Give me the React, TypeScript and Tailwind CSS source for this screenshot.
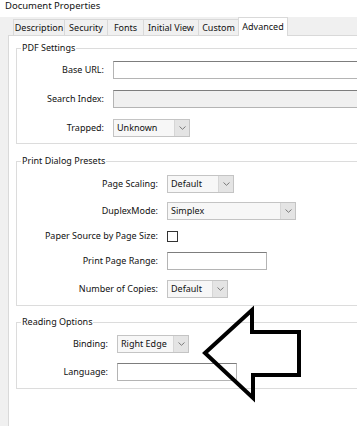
import React from 'react';

const tabs = [
  { name: 'Description', w: 'w-[51px]' },
  { name: 'Security', w: 'w-[43px]' },
  { name: 'Fonts', w: 'w-[36px]' },
  { name: 'Initial View', w: 'w-[55px]' },
  { name: 'Custom', w: 'w-[40px]' },
];

function Chevron() {
  return (
    <svg width="7" height="4" viewBox="0 0 7 4" fill="none">
      <path d="M0.5 0.5 L3.5 3.3 L6.5 0.5" stroke="#7a7a7a" strokeWidth="1" />
    </svg>
  );
}

function Select({ value, className }: { value: string; className: string }) {
  return (
    <div className={`flex h-[18px] border border-[#c4c4c4] ${className}`}>
      <div className="flex flex-1 items-center bg-[#f7f7f7] pl-[3px]">{value}</div>
      <div className="flex w-[15px] items-center justify-center border-l border-[#d6d6d6] bg-[#e4e4e4]">
        <Chevron />
      </div>
    </div>
  );
}

function TextBox({ className, disabled }: { className: string; disabled?: boolean }) {
  return (
    <div
      className={`h-[18px] border border-[#b4b4b4] border-t-[#7d7d7d] ${
        disabled ? 'bg-[#f0f0f0]' : 'bg-white'
      } ${className}`}
    />
  );
}

function Row({
  label,
  labelW,
  className,
  children,
}: {
  label: string;
  labelW: string;
  className?: string;
  children: React.ReactNode;
}) {
  return (
    <div className={`flex h-[18px] items-center ${className ?? ''}`}>
      <div className={`${labelW} shrink-0 text-right`}>{label}</div>
      <div className="ml-[9px]">{children}</div>
    </div>
  );
}

// group box: title sits on the top border line, box runs off the right edge
function Group({
  title,
  className,
  children,
}: {
  title: string;
  className?: string;
  children: React.ReactNode;
}) {
  return (
    <div className={`ml-[7px] border border-r-0 border-[#dcdcdc] ${className ?? ''}`}>
      <div className="-mt-[7px] ml-[4px] w-fit bg-white px-[1px] leading-[12px]">{title}</div>
      {children}
    </div>
  );
}

export default function App() {
  return (
    <div className="relative h-[426px] w-[357px] overflow-hidden bg-white font-['Noto_Sans',sans-serif] text-[9px] text-[#111]">
      <div className="h-[17px] pl-[5px] pt-[1px] text-[9.5px] leading-[10px]">Document Properties</div>

      <div className="flex h-[409px] flex-col bg-[#f0f0f0]">
        <div className="flex h-[18px] items-end pl-[13px]">
          {tabs.map((t) => (
            <div
              key={t.name}
              className={`${t.w} flex h-[16px] items-center justify-center border-l border-t border-[#d9d9d9] bg-[#f0f0f0]`}
            >
              {t.name}
            </div>
          ))}
          <div className="relative z-10 mb-[-1px] flex h-[19px] w-[50px] items-start justify-center border border-b-0 border-[#d9d9d9] bg-white pt-[2px]">
            Advanced
          </div>
        </div>

        <div className="flex flex-1">
          <div className="w-[8px] shrink-0" />
          <div className="min-w-0 flex-1 overflow-hidden border-l border-t border-[#d9d9d9] bg-white">
            <Group title="PDF Settings" className="mt-[12px] pb-[6px]">
              <Row label="Base URL:" labelW="w-[87px]" className="mt-[7px]">
                <TextBox className="w-[260px]" />
              </Row>
              <Row label="Search Index:" labelW="w-[87px]" className="mt-[11px]">
                <TextBox className="w-[260px]" disabled />
              </Row>
              <Row label="Trapped:" labelW="w-[87px]" className="mt-[11px]">
                <Select value="Unknown" className="w-[77px]" />
              </Row>
            </Group>

            <Group title="Print Dialog Presets" className="mt-[17px] pb-[7px]">
              <Row label="Page Scaling:" labelW="w-[141px]" className="mt-[8px]">
                <Select value="Default" className="w-[67px]" />
              </Row>
              <Row label="DuplexMode:" labelW="w-[141px]" className="mt-[9px]">
                <Select value="Simplex" className="w-[129px]" />
              </Row>
              <Row label="Paper Source by Page Size:" labelW="w-[141px]" className="mt-[7px]">
                <div className="h-[11px] w-[11px] border border-[#333]" />
              </Row>
              <Row label="Print Page Range:" labelW="w-[141px]" className="mt-[7px]">
                <TextBox className="w-[100px]" />
              </Row>
              <Row label="Number of Copies:" labelW="w-[141px]" className="mt-[10px]">
                <Select value="Default" className="w-[61px]" />
              </Row>
            </Group>

            <Group title="Reading Options" className="mt-[16px] pb-[7px]">
              <Row label="Binding:" labelW="w-[91px]" className="mt-[7px]">
                <Select value="Right Edge" className="w-[72px]" />
              </Row>
              <Row label="Language:" labelW="w-[91px]" className="mt-[10px]">
                <TextBox className="w-[120px]" />
              </Row>
            </Group>
          </div>
        </div>
      </div>

      <svg
        className="absolute left-[200px] top-[305px]"
        width="105"
        height="98"
        viewBox="0 0 105 98"
        fill="none"
      >
        <polygon
          points="5,48 52,5 52,27 99,27 99,70 53,70 53,93"
          stroke="#000"
          strokeWidth="4"
          strokeLinejoin="miter"
        />
      </svg>
    </div>
  );
}
